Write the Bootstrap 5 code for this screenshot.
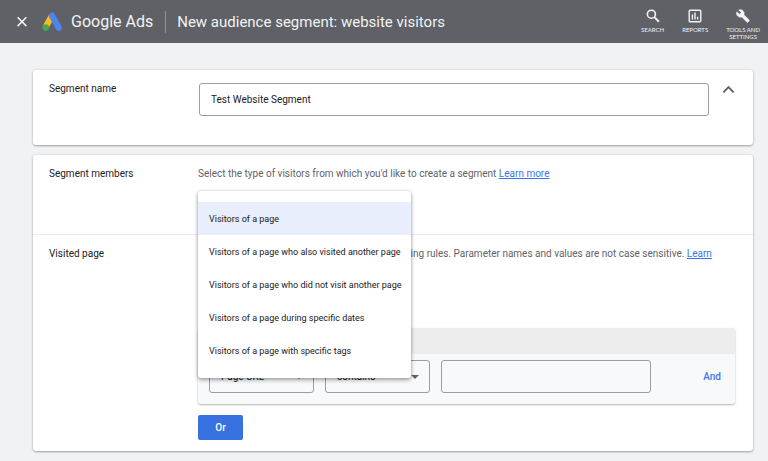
<!DOCTYPE html>
<html lang="en">
<head>
<meta charset="utf-8">
<meta name="viewport" content="width=device-width, initial-scale=1">
<title>Google Ads - New audience segment</title>
<link href="https://cdn.jsdelivr.net/npm/bootstrap@5.3.0/dist/css/bootstrap.min.css" rel="stylesheet">
<style>
  body { font-family: Roboto, "Liberation Sans", sans-serif; font-size: 10px; line-height: 16px; color: #3c4043; background: #f1f2f4; }
  .topbar { background: #5f6166; color: #f1f3f4; height: 43px; padding: 0 8px 0 15px; }
  .topbar button { color: inherit; background: none; border: 0; padding: 0; }
  .brand-name, .page-title { line-height: 20px; white-space: nowrap; }
  .brand-name { margin-left: 8px; font-size: 16px; }
  .page-title { margin: 0; padding-left: 11px; font-size: 15px; font-weight: 400; }
  .split { width: 1px; height: 22px; background: #909296; margin: 0 0 0 12px; }
  .tools { gap: 18px; padding-top: 9px; }
  .tool { font-family: Lato, Roboto, sans-serif; font-size: 6px; line-height: 7px; text-transform: uppercase; }
  .tool svg { display: block; margin: 0 auto 3px; }
  main { padding: 27px 15px 10px 33px; }
  .panel { background: #fff; border-radius: 3px; box-shadow: 0 1px 2px rgba(60,64,67,.4), 0 0 3px rgba(60,64,67,.15); }
  .panel + .panel { margin-top: 10px; }
  .panel-row { padding: 11px 18px 0 16px; }
  .panel-row + .panel-row { border-top: 1px solid #e8eaed; }
  .row-label { width: 149px; flex: none; color: #202124; }
  .name-row { min-height: 75px; padding-right: 16px; }
  .members-row { min-height: 79px; }
  .visited-row { padding-bottom: 11px; }
  .hint { color: #5f6368; margin: 0; }
  .hint a { color: #3b74e8; }
  .field { height: 33px; font-size: 10px; line-height: 16px; color: #202124; border: 1px solid #9a9da1; border-radius: 3px; background-color: transparent; }
  input.field { padding: 0 11px; }
  .name-field { margin: 2px 11px 0 1px; }
  .pick { flex: 0 0 105px; width: 105px; padding: 0 28px 0 11px; background-size: 8px 4px; background-position: right 10px center;
    background-image: url("data:image/svg+xml,%3csvg xmlns='http://www.w3.org/2000/svg' viewBox='0 0 8 4'%3e%3cpath fill='%235f6368' d='M0 0h8L4 4z'/%3e%3c/svg%3e"); }
  .type-menu { position: absolute; top: 25px; left: 0; min-width: 213px; padding: 11px 0; border: 0; border-radius: 3px; font-size: 9px; box-shadow: 0 2px 4px rgba(0,0,0,.35), 0 0 3px rgba(0,0,0,.15); }
  .type-menu .dropdown-item { height: 33px; padding: 0 9px 0 11px; color: #202124; }
  .type-menu .active { background: #e8eefb; }
  .rules { margin-top: 50px; border-radius: 3px; overflow: hidden; background: #f8f9fb; box-shadow: 0 1px 2px rgba(60,64,67,.4); }
  .rules-head { height: 26px; background: #ededee; }
  .rules-body { padding: 6px 14px 11px 11px; gap: 11px; }
  .value-field { flex: 0 1 210px; width: 210px; }
  .link-btn { border: 0; padding: 0; background: none; color: #3f78ea; font-weight: 500; font-size: 10px; }
  .or-btn { margin-top: 11px; width: 45px; height: 25px; padding: 0; font-size: 10px; line-height: 16px; font-weight: 500; border: 0; border-radius: 2px; background: #3871e0; }
</style>
</head>
<body>
<header class="topbar d-flex align-items-center">
  <button type="button" aria-label="Close" class="d-flex">
    <svg width="14" height="14" viewBox="0 0 14 14" fill="none" stroke="currentColor" stroke-width="1.5"><path d="M2.600 2.300l8.800 8.800M11.400 2.300l-8.800 8.800"/></svg>
  </button>
  <svg class="ms-2 ps-1 flex-shrink-0" width="26" height="20" viewBox="-1 0 22 20" aria-hidden="true">
    <path d="M3.700 15L9.600 4.200" stroke="#fbbc1c" stroke-width="6.200"/>
    <path d="M10 3.700l6.700 12" stroke="#4d84ee" stroke-width="6.400" stroke-linecap="round"/>
    <circle cx="3.700" cy="15.600" r="3.300" fill="#4aa558"/>
  </svg>
  <span class="brand-name">Google Ads</span>
  <span class="split"></span>
  <h1 class="page-title">New audience segment: website visitors</h1>
  <nav class="tools ms-auto d-flex align-self-stretch align-items-start" aria-label="Tools">
    <button type="button" class="tool">
      <svg width="14" height="14" viewBox="0 0 14 14" fill="none" stroke="currentColor" stroke-width="1.600"><circle cx="5.400" cy="5.200" r="4"/><path d="M8.300 8.100l4.600 4.700" stroke-width="2"/></svg>
      Search</button>
    <button type="button" class="tool">
      <svg width="14" height="14" viewBox="0 0 14 14" fill="none" stroke="currentColor" stroke-width="1.400"><rect x="1.200" y="1.200" width="11.600" height="11.600" rx="1"/><path d="M4.400 5.600v5M7 3.600v7M9.600 7.800v2.800"/></svg>
      Reports</button>
    <button type="button" class="tool">
      <svg width="14" height="14" viewBox="0 0 24 24" fill="currentColor"><path d="M22.700 19l-9.100-9.100c.9-2.300.4-5-1.500-6.900-2-2-5-2.400-7.400-1.300L9 6 6 9 1.600 4.700C.4 7.100.9 10.100 2.900 12.100c1.900 1.900 4.600 2.400 6.900 1.500l9.100 9.100c.4.4 1 .4 1.400 0l2.300-2.300c.5-.4.5-1.100.1-1.400z" stroke="currentColor"/></svg>
      Tools and<br>settings</button>
  </nav>
</header>

<main>
  <section class="panel">
    <div class="panel-row name-row d-flex align-items-start">
      <label class="row-label" for="segment-name">Segment name</label>
      <input id="segment-name" class="field name-field flex-grow-1" type="text" value="Test Website Segment">
      <button type="button" class="btn p-0 border-0 d-flex" aria-label="Collapse">
        <svg width="17" height="18" viewBox="0 0 17 18" fill="none" stroke="#5f6368" stroke-width="1.900"><path d="M3.400 11.400l5.100-5.200 5.100 5.200"/></svg>
      </button>
    </div>
  </section>

  <section class="panel">
    <div class="panel-row members-row d-flex">
      <div class="row-label" id="members-label">Segment members</div>
      <div class="flex-grow-1 position-relative">
        <p class="hint">Select the type of visitors from which you'd like to create a segment <a href="#">Learn more</a></p>
        <div class="dropdown-menu type-menu show" role="listbox" aria-labelledby="members-label">
          <button type="button" class="dropdown-item active" role="option" aria-selected="true">Visitors of a page</button>
          <button type="button" class="dropdown-item" role="option">Visitors of a page who also visited another page</button>
          <button type="button" class="dropdown-item" role="option">Visitors of a page who did not visit another page</button>
          <button type="button" class="dropdown-item" role="option">Visitors of a page during specific dates</button>
          <button type="button" class="dropdown-item" role="option">Visitors of a page with specific tags</button>
        </div>
      </div>
    </div>
    <div class="panel-row visited-row d-flex">
      <div class="row-label">Visited page</div>
      <div class="flex-grow-1">
        <p class="hint">Select people who visited a page with the following rules. Parameter names and values are not case sensitive. <a href="#">Learn<br>more</a></p>
        <div class="rules">
          <div class="rules-head"></div>
          <div class="rules-body d-flex align-items-center">
            <select class="form-select field pick" aria-label="Rule parameter"><option>Page URL</option></select>
            <select class="form-select field pick" aria-label="Rule condition"><option>contains</option></select>
            <input class="field value-field" type="text" aria-label="Rule value">
            <button type="button" class="link-btn ms-auto">And</button>
          </div>
        </div>
        <button type="button" class="btn btn-primary or-btn">Or</button>
      </div>
    </div>
  </section>
</main>
<script src="https://cdn.jsdelivr.net/npm/bootstrap@5.3.0/dist/js/bootstrap.bundle.min.js"></script>
</body>
</html>
